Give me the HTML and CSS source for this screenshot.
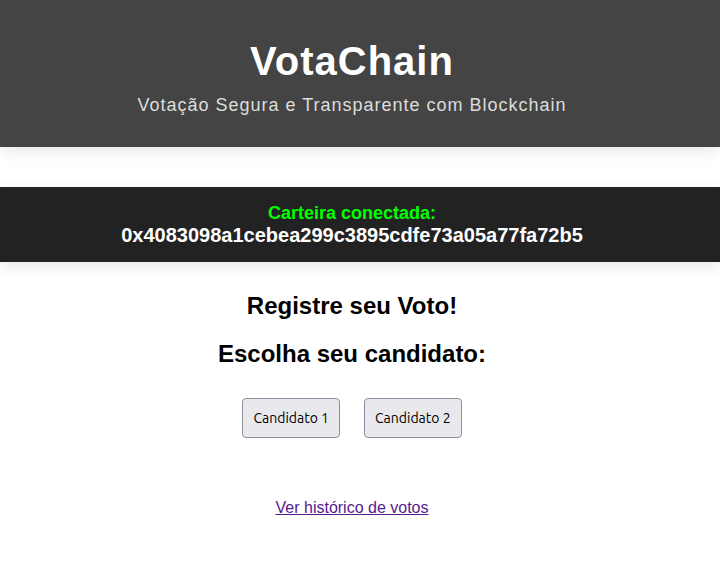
FILE: index.html
```html
<!DOCTYPE html>
<html lang="pt-BR">
<head>
<meta charset="utf-8">
<meta name="viewport" content="width=device-width, initial-scale=1">
<title>VotaChain</title>
<link rel="stylesheet" href="styles.css">
</head>
<body>
<header class="header">
<h1 class="title">VotaChain</h1>
<p class="subtitle">Votação Segura e Transparente com Blockchain</p>
</header>
<section class="wallet">
<p class="wallet-label">Carteira conectada:</p>
<p class="wallet-address">0x4083098a1cebea299c3895cdfe73a05a77fa72b5</p>
</section>
<main class="vote">
<h2 class="heading">Registre seu Voto!</h2>
<h2 class="heading">Escolha seu candidato:</h2>
<div class="candidates">
<button class="candidate" type="button">Candidato 1</button>
<button class="candidate" type="button">Candidato 2</button>
</div>
<a class="history" href="#historico">Ver histórico de votos</a>
</main>
</body>
</html>
```
FILE: styles.css
```css
body {
  margin: 0;
  background: #fff;
  color: #000;
  font-family: "Liberation Sans", Arial, sans-serif;
  text-align: center;
}

.header,
.wallet,
.vote {
  padding-right: 16px;
}

.header {
  padding-top: 38px;
  padding-bottom: 30px;
  background: #444;
  box-shadow: 0 4px 15px rgba(0, 0, 0, 0.1);
}

.title {
  margin: 0;
  color: #fff;
  font-size: 40px;
  line-height: 46px;
  letter-spacing: 1px;
}

.subtitle {
  margin: 10px 0 0;
  color: #ddd;
  font-size: 18px;
  line-height: 23px;
  letter-spacing: 1px;
}

.wallet {
  margin-top: 40px;
  padding-top: 15px;
  padding-bottom: 16px;
  background: #222;
  box-shadow: 0 4px 15px rgba(0, 0, 0, 0.1);
  font-weight: bold;
}

.wallet-label,
.wallet-address {
  margin: 0;
  line-height: 22px;
}

.wallet-label {
  color: #0f0;
  font-size: 18px;
}

.wallet-address {
  color: #fff;
  font-size: 20px;
}

.vote {
  padding-top: 30px;
}

.heading {
  margin: 0 0 20px;
  font-size: 24px;
  line-height: 28px;
}

.candidates {
  display: flex;
  justify-content: center;
  gap: 24px;
  margin-top: 30px;
}

.candidate {
  height: 40px;
  padding: 0 10px;
  border: 1px solid #8f8f9d;
  border-radius: 4px;
  background: #e9e9ed;
  color: #000;
  font-family: Ubuntu, "Noto Sans", "Open Sans", sans-serif;
  font-size: 14px;
}

.history {
  display: inline-block;
  margin-top: 60px;
  color: #551a8b;
  font-size: 16px;
  line-height: 20px;
}
```
